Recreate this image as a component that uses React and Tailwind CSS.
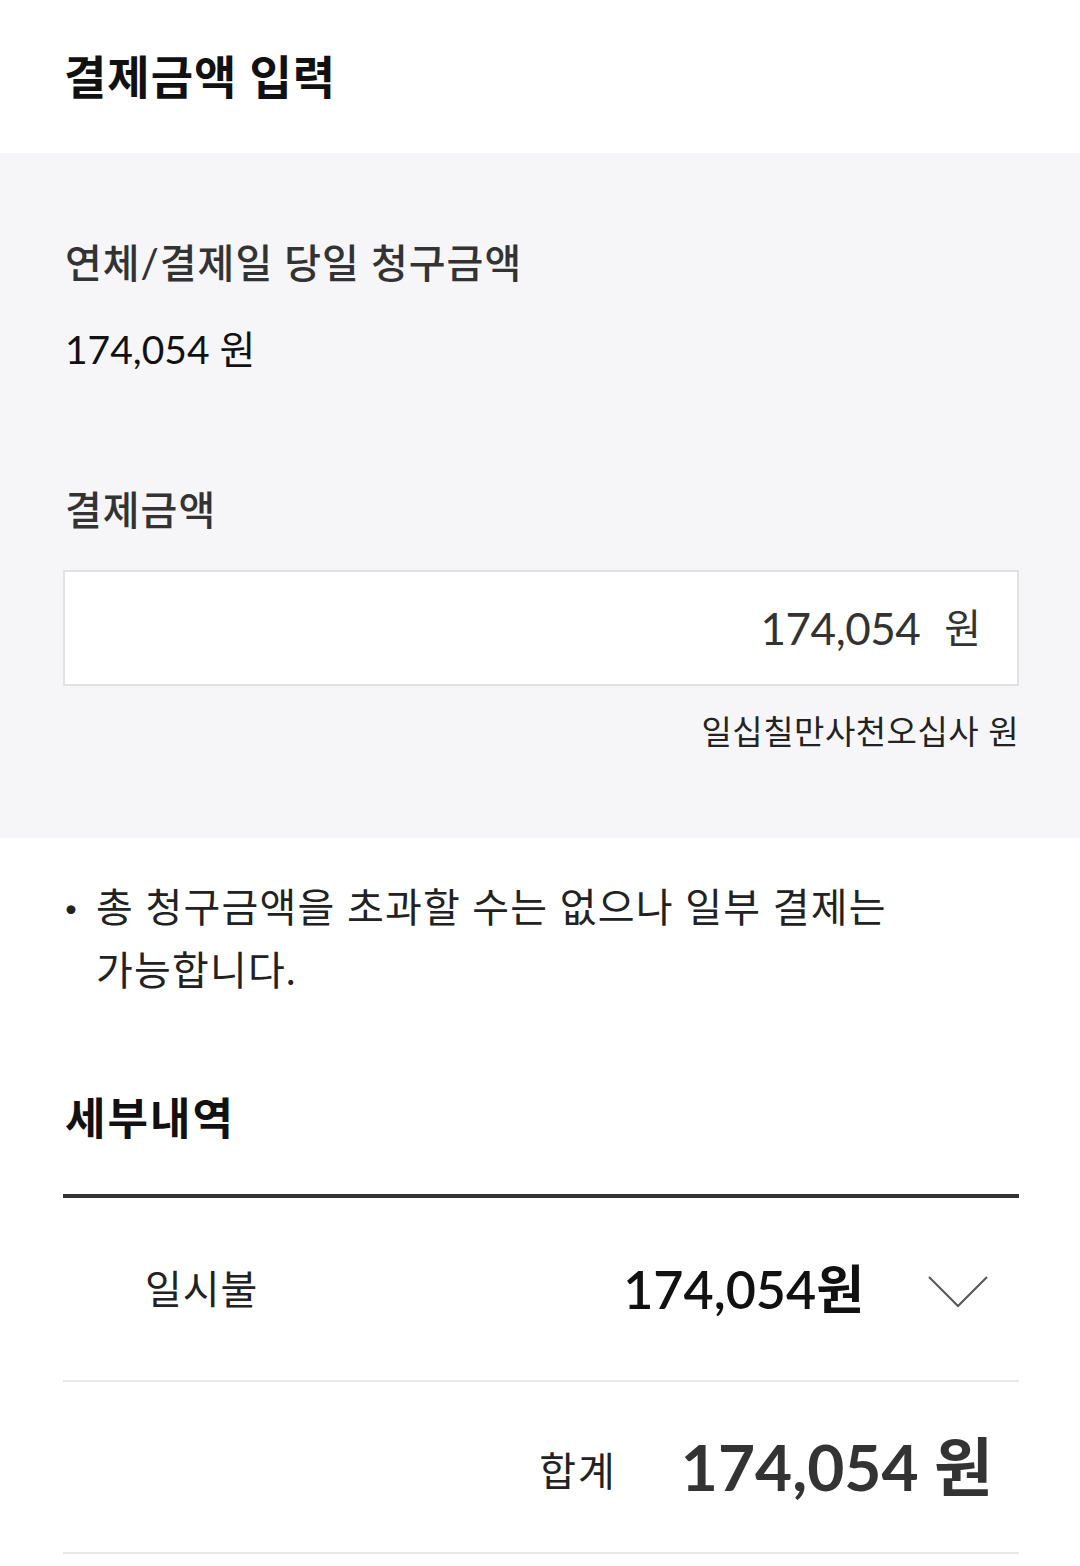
export default function App() {
  const font = { fontFamily: 'Lato, "Noto Sans CJK KR", sans-serif' };

  return (
    <div className="w-[1080px] min-h-[1566px] bg-white text-[#111]" style={font}>
      {/* header */}
      <div className="h-[153px] flex items-center px-[64px]">
        <h1 className="text-[46px] font-bold tracking-[1px] leading-none text-[#111]">결제금액 입력</h1>
      </div>

      {/* amount input block */}
      <div className="bg-[#f6f6f8] pl-[63px] pr-[61px] pt-[85px] pb-[85px]">
        <div className="text-[40px] leading-[50px] font-medium text-[#333] tracking-[1px] pl-[2px]">
          연체/결제일 당일 청구금액
        </div>
        <div className="mt-[36px] text-[39px] leading-[50px] text-[#111] pl-[2px]">174,054 원</div>

        <div className="mt-[111px] text-[40px] leading-[50px] font-medium text-[#333] tracking-[1px] pl-[2px]">
          결제금액
        </div>
        <div className="mt-[35px] h-[116px] bg-white border-2 border-[#e2e2e4] flex items-center justify-end pr-[36px] text-[44px] text-[#333]">
          <span className="tracking-[-0.5px]">174,054</span>
          <span className="ml-[24px] text-[40px]">원</span>
        </div>
        <div className="mt-[23px] text-right text-[33px] leading-[44px] text-[#222] tracking-[0.5px]">
          일십칠만사천오십사 원
        </div>
      </div>

      {/* notice */}
      <div className="pl-[63px] pr-[61px] pt-[38px]">
        <div className="flex text-[40px] leading-[63px] text-[#222] tracking-[1.2px]">
          <span className="w-[33px] shrink-0 text-[24px] pl-[1px]">•</span>
          <p className="flex-1 break-keep">총 청구금액을 초과할 수는 없으나 일부 결제는 가능합니다.</p>
        </div>
      </div>

      {/* details */}
      <div className="pl-[63px] pr-[61px] mt-[86px]">
        <h2 className="text-[44px] leading-[60px] font-bold text-[#111] tracking-[2px] pl-[2px]">세부내역</h2>
        <div className="mt-[46px] h-[4px] bg-[#333]" />

        <div className="h-[184px] flex items-center border-b-2 border-[#e8e8e8] pl-[82px] pr-[31px]">
          <span className="text-[40px] text-[#222] tracking-[1px]">일시불</span>
          <span className="ml-auto text-[52px] font-semibold text-[#111]">174,054원</span>
          <svg width="60" height="32" viewBox="0 0 60 32" className="ml-[64px] mt-[6px]">
            <polyline points="1,1 30,30 59,1" fill="none" stroke="#555" strokeWidth="2" />
          </svg>
        </div>

        <div className="h-[172px] flex items-center justify-end border-b-2 border-[#e8e8e8] pr-[26px]">
          <span className="text-[40px] text-[#222] tracking-[2px] mt-[8px] ml-[3px]">합계</span>
          <span className="ml-[64px] text-[64px] font-bold text-[#333]">174,054 원</span>
        </div>
      </div>
    </div>
  );
}
